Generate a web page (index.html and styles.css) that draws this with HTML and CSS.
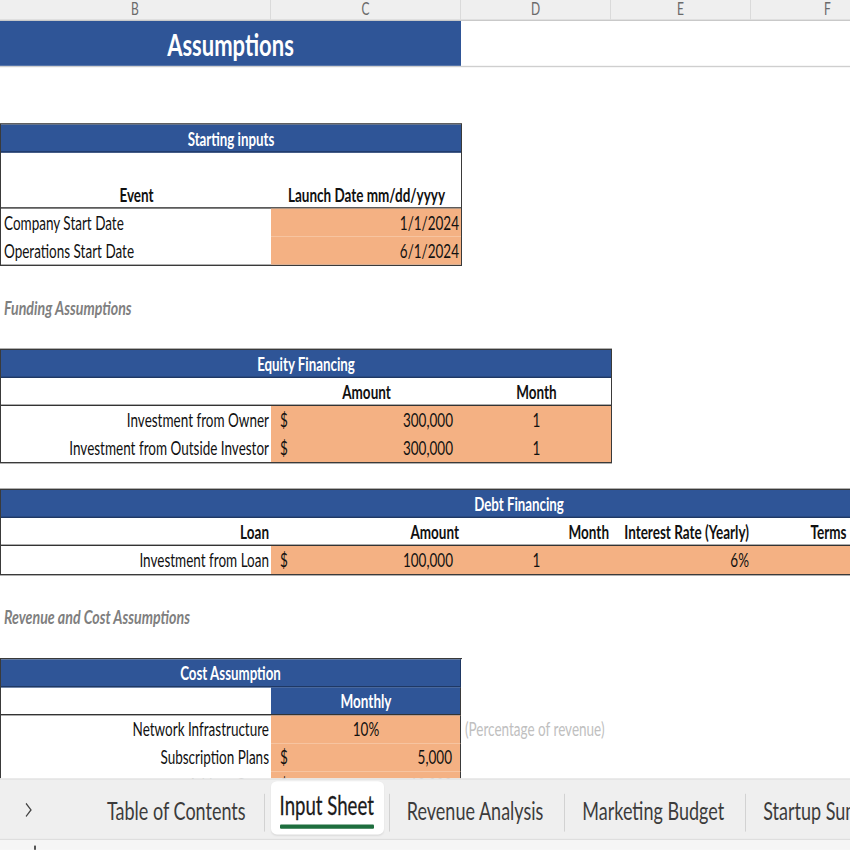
FILE: index.html
```html
<!DOCTYPE html>
<html>
<head>
<meta charset="utf-8">
<title>Assumptions</title>
<link rel="stylesheet" href="styles.css">
</head>
<body>
<div class="screen">
  <div class="sheet">
    <div class="colheads">
      <div class="colhead">B</div>
      <div class="colhead">C</div>
      <div class="colhead">D</div>
      <div class="colhead">E</div>
      <div class="colhead">F</div>
    </div>

    <div class="title-row"><div class="title">Assumptions</div></div>

    <div class="tbl tbl-start">
      <div class="hdr span-all">Starting inputs</div>
      <div class="cell sub tall center">Event</div>
      <div class="cell sub tall center">Launch Date mm/dd/yyyy</div>
      <div class="cell left">Company Start Date</div>
      <div class="cell input right">1/1/2024</div>
      <div class="cell left">Operations Start Date</div>
      <div class="cell input right">6/1/2024</div>
    </div>

    <div class="section-label label-funding">Funding Assumptions</div>

    <div class="tbl tbl-equity">
      <div class="hdr span-all">Equity Financing</div>
      <div class="cell sub"></div>
      <div class="cell sub center">Amount</div>
      <div class="cell sub center">Month</div>
      <div class="cell right">Investment from Owner</div>
      <div class="cell input money"><span>$</span><span>300,000</span></div>
      <div class="cell input center">1</div>
      <div class="cell right">Investment from Outside Investor</div>
      <div class="cell input money"><span>$</span><span>300,000</span></div>
      <div class="cell input center">1</div>
    </div>

    <div class="tbl tbl-debt">
      <div class="hdr span-all">Debt Financing</div>
      <div class="cell sub right">Loan</div>
      <div class="cell sub right">Amount</div>
      <div class="cell sub right">Month</div>
      <div class="cell sub right">Interest Rate (Yearly)</div>
      <div class="cell sub center">Terms</div>
      <div class="cell sub"></div>
      <div class="cell right">Investment from Loan</div>
      <div class="cell input money"><span>$</span><span>100,000</span></div>
      <div class="cell input center">1</div>
      <div class="cell input right">6%</div>
      <div class="cell input"></div>
      <div class="cell input"></div>
    </div>

    <div class="section-label label-revenue">Revenue and Cost Assumptions</div>

    <div class="tbl tbl-cost">
      <div class="hdr span-two">Cost Assumption</div>
      <div class="cell note"></div>
      <div class="cell sub"></div>
      <div class="cell sub blue center">Monthly</div>
      <div class="cell note"></div>
      <div class="cell right">Network Infrastructure</div>
      <div class="cell input center">10%</div>
      <div class="cell note">(Percentage of revenue)</div>
      <div class="cell right">Subscription Plans</div>
      <div class="cell input money"><span>$</span><span>5,000</span></div>
      <div class="cell note"></div>
      <div class="cell right">Add-on Costs</div>
      <div class="cell input money"><span>$</span><span>10,000</span></div>
      <div class="cell note"></div>
    </div>
  </div>

  <div class="tabbar">
    <div class="tab-nav">
      <svg width="7" height="11" viewBox="0 0 7 11"><polyline points="1,0.8 6,5.5 1,10.2" fill="none" stroke="#444" stroke-width="1.1"/></svg>
    </div>
    <div class="tab">Table of Contents</div>
    <div class="tab-sep"></div>
    <div class="tab tab-active"><span class="tab-text">Input Sheet</span><span class="tab-line"></span></div>
    <div class="tab-sep"></div>
    <div class="tab tab-wide">Revenue Analysis</div>
    <div class="tab-sep"></div>
    <div class="tab tab-wide">Marketing Budget</div>
    <div class="tab-sep"></div>
    <div class="tab">Startup Summary</div>
  </div>
  <div class="statusbar"><span class="status-mark"></span></div>
</div>
</body>
</html>
```

FILE: styles.css
```css
* { box-sizing: border-box; }

html, body {
  margin: 0;
  padding: 0;
  width: 850px;
  height: 850px;
  overflow: hidden;
  background: #fff;
}

body {
  font-family: Lato, "Liberation Sans", sans-serif;
  color: #111;
}

/* the capture is stretched vertically by 1.4; lay out at natural height and stretch */
.screen {
  width: 850px;
  height: 607.14px;
  transform: scaleY(1.4);
  transform-origin: 0 0;
  display: flex;
  flex-direction: column;
}

.sheet {
  flex: 1 1 auto;
  min-height: 0;
  overflow: hidden;
  background: #fff;
}

.colheads {
  display: grid;
  grid-template-columns: 271px 190px 150px 140px 154px;
  height: 15px;
  background: #efefef;
  border-bottom: 1px solid #c9c9c9;
}

.colhead {
  font-size: 12px;
  line-height: 14px;
  color: #6a6a6a;
  text-align: center;
  border-right: 1px solid #dadada;
}

.title-row {
  height: 33px;
  border-bottom: 1px solid #cfcfcf;
}

.title {
  width: 461px;
  height: 32px;
  background: #2f5597;
  color: #fff;
  font-weight: bold;
  font-size: 22px;
  display: flex;
  align-items: center;
  justify-content: center;
}

.tbl {
  display: grid;
  border: 1px solid #3a3a3a;
  font-size: 13.5px;
}

.tbl-start {
  width: 462px;
  grid-template-columns: 270px 190px;
  margin-top: 40px;
}

.tbl-equity {
  width: 612px;
  grid-template-columns: 270px 190px 150px;
  margin-top: 19px;
}

.tbl-debt {
  width: 1038px;
  grid-template-columns: 270px 190px 150px 140px 154px 132px;
  margin-top: 18px;
}

.tbl-cost {
  width: 462px;
  grid-template-columns: 270px 190px 170px;
  margin-top: 19px;
  border-bottom: none;
  border-right: none;
}

.section-label {
  height: 20px;
  line-height: 20px;
  padding-left: 4px;
  font-size: 14.2px;
  font-weight: bold;
  font-style: italic;
  color: #7f7f7f;
}

.label-funding { margin-top: 20px; }
.label-revenue { margin-top: 20px; }

.hdr {
  height: 20px;
  background: #2f5597;
  color: #fff;
  font-weight: bold;
  font-size: 13.3px;
  display: flex;
  align-items: center;
  justify-content: center;
  border-bottom: 1px solid #1f3864;
}

.span-all { grid-column: 1 / -1; }
.span-two { grid-column: 1 / 3; }

.cell {
  height: 20px;
  line-height: 17px;
  display: flex;
  align-items: flex-end;
  padding: 0 2px 1.5px 3px;
  white-space: nowrap;
}

.sub {
  font-weight: bold;
  font-size: 13.5px;
  border-bottom: 1px solid #333;
  line-height: 16px;
}

.sub.tall { height: 40px; }

.left { justify-content: flex-start; }
.right { justify-content: flex-end; }
.center { justify-content: center; }

.input { background: #f4b183; }

.money {
  justify-content: space-between;
  padding: 0 8px 1.5px 9px;
}

.blue {
  background: #2f5597;
  color: #fff;
  align-items: center;
  padding-bottom: 0;
}

.tbl-cost .note {
  color: #c0c0c0;
  padding-left: 4px;
  background: #fff;
}

.tbl-cost .input,
.tbl-cost .blue { border-right: 1px solid #3a3a3a; }

.tbl-cost .hdr { border-right: 1px solid #1f3864; }

/* sheet tabs */
.tabbar {
  flex: 0 0 42.9px;
  display: flex;
  align-items: flex-start;
  background: #efefef;
  border-top: 1px solid #e3e3e3;
  overflow: hidden;
  white-space: nowrap;
}

.tab-nav {
  flex: 0 0 90px;
  padding: 16px 0 0 25px;
}

.tab-nav svg { display: block; }

.tab {
  flex: 0 0 auto;
  height: 38px;
  margin-top: 1px;
  padding: 4px 18px 0 17px;
  font-size: 18px;
  color: #3c3c3c;
  display: flex;
  align-items: center;
}

.tab-wide { padding-right: 21px; }

.tab-sep {
  flex: 0 0 1px;
  height: 27px;
  margin-top: 10px;
  background: #d2d2d2;
}

.tab-active {
  margin: 0.5px 5px 0 6px;
  padding: 4px 10px 0 9px;
  background: #fff;
  border-radius: 6px 6px 6px 6px / 4px 4px 4px 4px;
  box-shadow: 0 1px 1.5px rgba(0, 0, 0, 0.08);
  flex-direction: column;
  justify-content: center;
  align-items: stretch;
}

.tab-text {
  font-size: 18.6px;
  line-height: 20px;
  color: #1b1b1b;
  -webkit-text-stroke: 0.2px #1b1b1b;
}

.tab-line {
  height: 3px;
  margin-top: 4px;
  background: #1e6e3e;
  border-radius: 1px;
}

.statusbar {
  flex: 0 0 7.86px;
  background: #f6f6f6;
  border-top: 1px solid #dedede;
}

.status-mark {
  display: block;
  width: 2px;
  height: 3px;
  margin: 4px 0 0 34px;
  background: #555;
}
```
